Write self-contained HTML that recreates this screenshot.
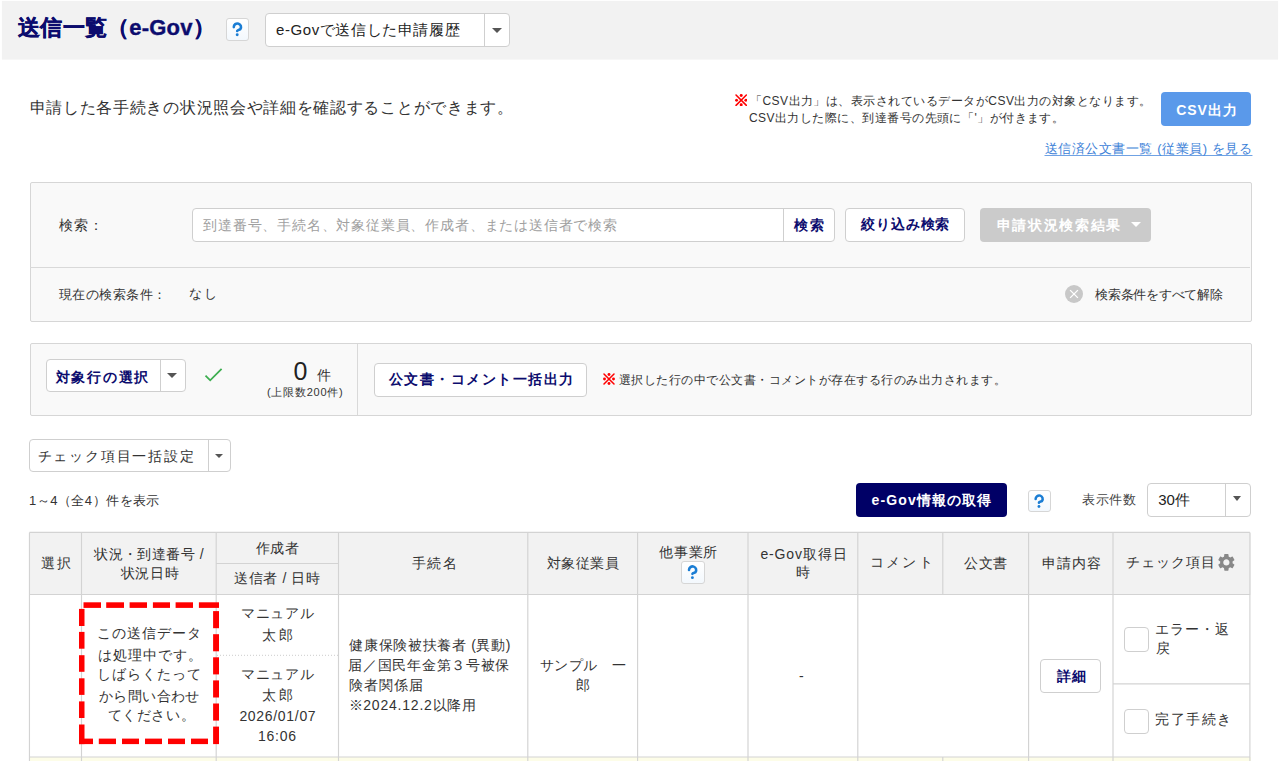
<!DOCTYPE html>
<html lang="ja">
<head>
<meta charset="utf-8">
<style>
*{box-sizing:border-box;margin:0;padding:0}
html,body{width:1280px;height:761px;overflow:hidden;background:#fff}
body{font-family:"Liberation Sans",sans-serif;color:#333;position:relative}
.t{position:absolute;white-space:nowrap;line-height:20px}
.s{position:absolute}
.q{border:1px solid #d6d6d6;border-radius:3px;background:linear-gradient(#fff,#f3f8fd)}
</style>
</head>
<body>
<svg class="s" style="left:0;top:0" width="1280" height="62"><rect x="1.9" y="0.9" width="1276.2" height="58.7" fill="#f2f2f2"/></svg>
<div class="t" style="left:18.2px;top:17.5px;font-size:22px;letter-spacing:0.21px;color:#0c0c6e;font-weight:bold;-webkit-text-stroke:0.4px #0c0c6e;">送信一覧（e-Gov）</div>
<div class="s q" style="left:226px;top:18.2px;width:23px;height:23px"></div>
<svg class="s" style="left:226px;top:18.2px" width="23" height="23" viewBox="0 0 23 23"><path d="M7.8 9.1A3.6 3.6 0 1 1 14.3 11.2Q11.2 12.2 11.2 12.9" fill="none" stroke="#1a7dd4" stroke-width="2.6" stroke-linecap="round"/><circle cx="11.2" cy="16.75" r="1.45" fill="#1a7dd4"/></svg>
<div class="s" style="left:265px;top:13px;width:245px;height:34px;background:#fff;border:1px solid #cfcfcf;border-radius:4px"></div>
<div class="s" style="left:484px;top:14px;width:1px;height:32px;background:#cfcfcf"></div>
<div class="s" style="left:492px;top:27.8px;width:0;height:0;border-left:5.0px solid transparent;border-right:5.0px solid transparent;border-top:5px solid #555"></div>
<div class="t" style="left:276.0px;top:20.2px;font-size:15px;letter-spacing:0.596px;color:#222;">e-Govで送信した申請履歴</div>
<div class="t" style="left:29.6px;top:97.9px;font-size:16px;letter-spacing:0.693px;color:#333;">申請した各手続きの状況照会や詳細を確認することができます。</div>
<svg class="s" style="left:734.7px;top:93.9px" width="12.4" height="12.4" viewBox="0 0 12 12"><path d="M1 1L11 11M11 1L1 11" stroke="#f00" stroke-width="1.5" stroke-linecap="round"/><circle cx="6" cy="1.5" r="1.45" fill="#f00"/><circle cx="6" cy="10.5" r="1.45" fill="#f00"/><circle cx="1.5" cy="6" r="1.45" fill="#f00"/><circle cx="10.5" cy="6" r="1.45" fill="#f00"/></svg>
<div class="t" style="left:749.9px;top:90.7px;font-size:12px;letter-spacing:0.488px;color:#333;">「CSV出力」は、表示されているデータがCSV出力の対象となります。</div>
<div class="t" style="left:748.9px;top:107.6px;font-size:12px;letter-spacing:0.465px;color:#333;">CSV出力した際に、到達番号の先頭に「'」が付きます。</div>
<div class="s" style="left:1161px;top:92px;width:90px;height:34px;background:#5a99ea;border-radius:4px"></div>
<div class="t" style="left:1176.3px;top:99.75px;font-size:14px;letter-spacing:0.9px;color:#fff;font-weight:bold;">CSV出力</div>
<div class="t" style="left:1044.5px;top:139.3px;font-size:13px;letter-spacing:0.559px;color:#3d82d8;text-decoration:underline;text-underline-offset:2px;text-decoration-color:#6fa2e4;">送信済公文書一覧 (従業員) を見る</div>
<div class="s" style="left:29.5px;top:182px;width:1222px;height:140px;background:#f9f9f9;border:1px solid #d6d6d6;border-radius:2px"></div>
<div class="s" style="left:30px;top:267px;width:1220px;height:1px;background:#d9d9d9"></div>
<div class="t" style="left:58.7px;top:215.0px;font-size:14px;letter-spacing:1.25px;color:#333;">検索：</div>
<div class="s" style="left:192px;top:208px;width:643px;height:34px;background:#fff;border:1px solid #cfcfcf;border-radius:4px"></div>
<div class="s" style="left:783px;top:209px;width:1px;height:32px;background:#cfcfcf"></div>
<div class="t" style="left:203.2px;top:214.85px;font-size:14px;letter-spacing:0.807px;color:#a0a0a0;">到達番号、手続名、対象従業員、作成者、または送信者で検索</div>
<div class="t" style="left:793.8px;top:214.6px;font-size:14px;letter-spacing:2.1px;color:#0c0c6e;font-weight:bold;">検索</div>
<div class="s" style="left:845px;top:208px;width:120px;height:34px;background:#fff;border:1px solid #cfcfcf;border-radius:4px"></div>
<div class="t" style="left:860.7px;top:214.1px;font-size:14px;letter-spacing:0.96px;color:#0c0c6e;font-weight:bold;">絞り込み検索</div>
<div class="s" style="left:980px;top:208px;width:171px;height:34px;background:#cbcbcb;border-radius:4px"></div>
<div class="t" style="left:996.5px;top:214.7px;font-size:14px;letter-spacing:1.7px;color:#fff;font-weight:bold;">申請状況検索結果</div>
<div class="s" style="left:1130.8px;top:222.1px;width:0;height:0;border-left:5.0px solid transparent;border-right:5.0px solid transparent;border-top:5px solid #fff"></div>
<div class="t" style="left:58.7px;top:284.6px;font-size:13px;letter-spacing:0.543px;color:#333;">現在の検索条件：</div>
<div class="t" style="left:188.5px;top:283.6px;font-size:13px;letter-spacing:2.5px;color:#333;">なし</div>
<div class="s" style="left:1065px;top:285px;width:18px;height:18px;background:#c8c8c8;border-radius:50%"></div>
<svg class="s" style="left:1065px;top:285px" width="18" height="18"><path d="M5.1 5.1L12.9 12.9M12.9 5.1L5.1 12.9" stroke="#fff" stroke-width="1.3"/></svg>
<div class="t" style="left:1095.0px;top:285.1px;font-size:13px;letter-spacing:-0.244px;color:#333;">検索条件をすべて解除</div>
<div class="s" style="left:29.5px;top:343px;width:1222px;height:73px;background:#f9f9f9;border:1px solid #d6d6d6;border-radius:2px"></div>
<div class="s" style="left:357px;top:344px;width:1px;height:71px;background:#d9d9d9"></div>
<div class="s" style="left:46px;top:359px;width:140px;height:33px;background:#fff;border:1px solid #cfcfcf;border-radius:4px"></div>
<div class="s" style="left:160px;top:360px;width:1px;height:31px;background:#cfcfcf"></div>
<div class="s" style="left:166.5px;top:373px;width:0;height:0;border-left:5.5px solid transparent;border-right:5.5px solid transparent;border-top:5.5px solid #555"></div>
<div class="t" style="left:55.6px;top:366.5px;font-size:14px;letter-spacing:1.78px;color:#0c0c6e;font-weight:bold;">対象行の選択</div>
<svg class="s" style="left:203px;top:366px" width="22" height="18"><path d="M2.5 9.6L7.2 14.3L18.6 2.9" fill="none" stroke="#3dae50" stroke-width="1.8"/></svg>
<div class="t" style="left:293.6px;top:361.25px;font-size:25px;letter-spacing:0.0px;color:#222;">0</div>
<div class="t" style="left:317.0px;top:364.5px;font-size:14px;letter-spacing:0.0px;color:#333;">件</div>
<div class="t" style="left:267.0px;top:381.6px;font-size:11px;letter-spacing:0.75px;color:#333;">(上限数200件)</div>
<div class="s" style="left:374px;top:363px;width:213px;height:34px;background:#fff;border:1px solid #cfcfcf;border-radius:4px"></div>
<div class="t" style="left:389.0px;top:369.35px;font-size:14px;letter-spacing:1.455px;color:#0c0c6e;font-weight:bold;">公文書・コメント一括出力</div>
<svg class="s" style="left:603px;top:372.6px" width="12" height="12" viewBox="0 0 12 12"><path d="M1 1L11 11M11 1L1 11" stroke="#f00" stroke-width="1.5" stroke-linecap="round"/><circle cx="6" cy="1.5" r="1.45" fill="#f00"/><circle cx="6" cy="10.5" r="1.45" fill="#f00"/><circle cx="1.5" cy="6" r="1.45" fill="#f00"/><circle cx="10.5" cy="6" r="1.45" fill="#f00"/></svg>
<div class="t" style="left:619.0px;top:369.5px;font-size:12px;letter-spacing:0.487px;color:#333;">選択した行の中で公文書・コメントが存在する行のみ出力されます。</div>
<div class="s" style="left:29px;top:439px;width:202px;height:33px;background:#fff;border:1px solid #cfcfcf;border-radius:4px"></div>
<div class="s" style="left:208px;top:440px;width:1px;height:31px;background:#cfcfcf"></div>
<div class="s" style="left:214.5px;top:453.5px;width:0;height:0;border-left:4.5px solid transparent;border-right:4.5px solid transparent;border-top:4.6px solid #555"></div>
<div class="t" style="left:37.6px;top:446.4px;font-size:14px;letter-spacing:1.8px;color:#333;">チェック項目一括設定</div>
<div class="t" style="left:29.0px;top:490.8px;font-size:13px;letter-spacing:0.48px;color:#333;">1～4（全4）件を表示</div>
<div class="s" style="left:856px;top:483px;width:151px;height:34px;background:#000066;border-radius:4px"></div>
<div class="t" style="left:871.5px;top:489.5px;font-size:14px;letter-spacing:1.133px;color:#fff;font-weight:bold;">e-Gov情報の取得</div>
<div class="s q" style="left:1028px;top:489.5px;width:22.5px;height:22.75px"></div>
<svg class="s" style="left:1028px;top:489.5px" width="22.5" height="22.75" viewBox="0 0 23 23"><path d="M7.8 9.1A3.6 3.6 0 1 1 14.3 11.2Q11.2 12.2 11.2 12.9" fill="none" stroke="#1a7dd4" stroke-width="2.6" stroke-linecap="round"/><circle cx="11.2" cy="16.75" r="1.45" fill="#1a7dd4"/></svg>
<div class="t" style="left:1082.4px;top:489.8px;font-size:13px;letter-spacing:0.533px;color:#444;">表示件数</div>
<div class="s" style="left:1147px;top:483px;width:104px;height:34px;background:#fff;border:1px solid #cfcfcf;border-radius:4px"></div>
<div class="s" style="left:1225px;top:484px;width:1px;height:32px;background:#cfcfcf"></div>
<div class="s" style="left:1233px;top:496px;width:0;height:0;border-left:4.75px solid transparent;border-right:4.75px solid transparent;border-top:5.3px solid #555"></div>
<div class="t" style="left:1158.3px;top:489.5px;font-size:15px;letter-spacing:-0.1px;color:#222;">30件</div>
<div class="s" style="left:29px;top:532px;width:1222px;height:63px;background:#f2f2f2;border-radius:2px 2px 0 0"></div>
<div class="s" style="left:29px;top:757px;width:1222px;height:4px;background:#fdfde8"></div>
<svg class="s" style="left:0;top:0" width="1280" height="761"><path d="M29.45 532.4V761M81.5 532.4V761M216.2 532.4V761M338.5 532.4V761M527.8 532.4V761M637.6 532.4V761M748 532.4V761M857.8 532.4V761M1028.6 532.4V761M1113 532.4V761M1249.9 532.4V761M942.8 532.4V594.5M942.8 757V761M29.45 532.4H1249.9M216.2 563.5H338.5M29.45 594.5H1249.9M29.45 757H1249.9M1113 683.8H1249.9" stroke="#d3d3d3" stroke-width="1.15" fill="none"/><path d="M217 655.3H338" stroke="#cccccc" stroke-width="1" stroke-dasharray="1 2" fill="none"/></svg>
<div class="t" style="left:41.1px;top:552.65px;font-size:14px;letter-spacing:1.7px;color:#333;">選択</div>
<div class="t" style="left:94.1px;top:543.7px;font-size:14px;letter-spacing:0.463px;color:#333;">状況・到達番号 /</div>
<div class="t" style="left:120.5px;top:562.55px;font-size:14px;letter-spacing:0.7px;color:#333;">状況日時</div>
<div class="t" style="left:255.7px;top:537.55px;font-size:14px;letter-spacing:0.75px;color:#333;">作成者</div>
<div class="t" style="left:234.4px;top:568.05px;font-size:14px;letter-spacing:0.543px;color:#333;">送信者 / 日時</div>
<div class="t" style="left:411.8px;top:553.4px;font-size:14px;letter-spacing:1.6px;color:#333;">手続名</div>
<div class="t" style="left:546.8px;top:553.4px;font-size:14px;letter-spacing:0.55px;color:#333;">対象従業員</div>
<div class="t" style="left:659.3px;top:542.15px;font-size:14px;letter-spacing:0.7px;color:#333;">他事業所</div>
<div class="t" style="left:760.4px;top:543.55px;font-size:14px;letter-spacing:0.857px;color:#333;">e-Gov取得日</div>
<div class="t" style="left:795.5px;top:562.1px;font-size:14px;letter-spacing:0.0px;color:#333;">時</div>
<div class="t" style="left:869.5px;top:551.7px;font-size:14px;letter-spacing:2.367px;color:#333;">コメント</div>
<div class="t" style="left:964.3px;top:552.7px;font-size:14px;letter-spacing:0.6px;color:#333;">公文書</div>
<div class="t" style="left:1041.5px;top:552.7px;font-size:14px;letter-spacing:1.267px;color:#333;">申請内容</div>
<div class="t" style="left:1126.3px;top:551.9px;font-size:14px;letter-spacing:1.02px;color:#333;">チェック項目</div>
<div class="s q" style="left:681.3px;top:560.7px;width:23.4px;height:22.9px"></div>
<svg class="s" style="left:681.3px;top:560.7px" width="23.4" height="22.9" viewBox="0 0 23 23"><path d="M7.8 9.1A3.6 3.6 0 1 1 14.3 11.2Q11.2 12.2 11.2 12.9" fill="none" stroke="#1a7dd4" stroke-width="2.6" stroke-linecap="round"/><circle cx="11.2" cy="16.75" r="1.45" fill="#1a7dd4"/></svg>
<svg class="s" style="left:1216.1px;top:552.4px" width="20.75" height="20.75" viewBox="0 0 24 24"><path fill="#888" d="M19.14 12.94c.04-.3.06-.61.06-.94 0-.32-.02-.64-.07-.94l2.03-1.58a.49.49 0 0 0 .12-.61l-1.92-3.32a.488.488 0 0 0-.59-.22l-2.39.96c-.5-.38-1.03-.7-1.62-.94l-.36-2.54a.484.484 0 0 0-.48-.41h-3.840c-.24 0-.43.17-.47.41l-.36 2.54c-.59.24-1.130.57-1.62.94l-2.39-.96c-.22-.08-.47 0-.59.22L2.74 8.87c-.12.21-.08.47.12.61l2.03 1.58c-.05.3-.09.63-.09.94s.02.64.07.94l-2.03 1.58a.49.49 0 0 0-.12.61l1.92 3.32c.12.22.37.29.59.22l2.39-.96c.5.38 1.03.7 1.62.94l.36 2.54c.05.24.24.41.48.41h3.84c.24 0 .44-.17.47-.41l.36-2.54c.59-.24 1.13-.56 1.62-.94l2.39.96c.22.08.47 0 .59-.22l1.92-3.32c.12-.22.07-.47-.12-.61l-2.010-1.58zM12 15.6c-1.98 0-3.6-1.62-3.6-3.6s1.62-3.6 3.6-3.6 3.6 1.62 3.6 3.6-1.62 3.6-3.6 3.6z"/></svg>
<svg class="s" style="left:0;top:0" width="1280" height="761"><g fill="#ff0000"><rect x="83.50" y="602.30" width="17.50" height="5.60"/><rect x="106.20" y="602.30" width="17.80" height="5.60"/><rect x="129.60" y="602.30" width="17.40" height="5.60"/><rect x="152.90" y="602.30" width="17.10" height="5.60"/><rect x="175.60" y="602.30" width="17.40" height="5.60"/><rect x="198.90" y="602.30" width="20.10" height="5.60"/><rect x="213.10" y="611.10" width="5.90" height="17.10"/><rect x="213.10" y="634.20" width="5.90" height="17.10"/><rect x="213.10" y="657.30" width="5.90" height="17.10"/><rect x="213.10" y="680.40" width="5.90" height="17.10"/><rect x="213.10" y="703.50" width="5.90" height="17.10"/><rect x="213.10" y="726.60" width="5.90" height="17.50"/><rect x="79.00" y="738.60" width="14.00" height="5.50"/><rect x="98.80" y="738.60" width="17.20" height="5.50"/><rect x="122.00" y="738.60" width="17.00" height="5.50"/><rect x="145.00" y="738.60" width="17.00" height="5.50"/><rect x="168.00" y="738.60" width="17.00" height="5.50"/><rect x="191.00" y="738.60" width="17.00" height="5.50"/><rect x="79.00" y="608.90" width="5.50" height="17.10"/><rect x="79.00" y="631.90" width="5.50" height="16.80"/><rect x="79.00" y="655.20" width="5.50" height="16.60"/><rect x="79.00" y="678.30" width="5.50" height="16.60"/><rect x="79.00" y="701.40" width="5.50" height="16.60"/><rect x="79.00" y="724.50" width="5.50" height="19.60"/></g></svg>
<div class="t" style="left:97.4px;top:623.2px;font-size:14px;letter-spacing:1.0px;color:#333;">この送信データ</div>
<div class="t" style="left:98.4px;top:644.7px;font-size:14px;letter-spacing:0.867px;color:#333;">は処理中です。</div>
<div class="t" style="left:96.8px;top:663.7px;font-size:14px;letter-spacing:1.1px;color:#333;">しばらくたって</div>
<div class="t" style="left:98.8px;top:685.7px;font-size:14px;letter-spacing:0.433px;color:#333;">から問い合わせ</div>
<div class="t" style="left:107.6px;top:705.2px;font-size:14px;letter-spacing:0.62px;color:#333;">てください。</div>
<div class="t" style="left:241.3px;top:603.2px;font-size:14px;letter-spacing:0.6px;color:#333;">マニュアル</div>
<div class="t" style="left:261.9px;top:625.2px;font-size:14px;letter-spacing:3.3px;color:#333;">太郎</div>
<div class="t" style="left:241.3px;top:664.2px;font-size:14px;letter-spacing:0.6px;color:#333;">マニュアル</div>
<div class="t" style="left:261.9px;top:685.2px;font-size:14px;letter-spacing:3.3px;color:#333;">太郎</div>
<div class="t" style="left:239.4px;top:706.2px;font-size:14px;letter-spacing:0.689px;color:#333;">2026/01/07</div>
<div class="t" style="left:257.9px;top:726.3px;font-size:14px;letter-spacing:0.8px;color:#333;">16:06</div>
<div class="t" style="left:349.4px;top:634.8px;font-size:14px;letter-spacing:0.65px;color:#333;">健康保険被扶養者 (異動)</div>
<div class="t" style="left:348.4px;top:654.5px;font-size:14px;letter-spacing:0.69px;color:#333;">届／国民年金第３号被保</div>
<div class="t" style="left:349.4px;top:675.0px;font-size:14px;letter-spacing:0.875px;color:#333;">険者関係届</div>
<div class="t" style="left:348.5px;top:695.2px;font-size:14px;letter-spacing:0.792px;color:#333;">※2024.12.2以降用</div>
<div class="t" style="left:539.7px;top:654.8px;font-size:14px;letter-spacing:0.54px;color:#333;">サンプル　一</div>
<div class="t" style="left:576.0px;top:674.8px;font-size:14px;letter-spacing:0.0px;color:#333;">郎</div>
<div class="t" style="left:799px;top:666px;font-size:14px;color:#333">-</div>
<div class="s" style="left:1040px;top:659px;width:61px;height:34px;background:#fff;border:1px solid #cfcfcf;border-radius:4px"></div>
<div class="t" style="left:1056.6px;top:665.6px;font-size:14px;letter-spacing:1.4px;color:#0c0c6e;font-weight:bold;">詳細</div>
<div class="s" style="left:1124px;top:626.5px;width:25px;height:25px;background:#fff;border:1px solid #cfcfcf;border-radius:4px"></div>
<div class="s" style="left:1124px;top:708.5px;width:25px;height:25px;background:#fff;border:1px solid #cfcfcf;border-radius:4px"></div>
<div class="t" style="left:1154.6px;top:618.7px;font-size:14px;letter-spacing:1.175px;color:#333;">エラー・返</div>
<div class="t" style="left:1155.6px;top:638.4px;font-size:14px;letter-spacing:0.0px;color:#333;">戻</div>
<div class="t" style="left:1155.0px;top:709.2px;font-size:14px;letter-spacing:1.5px;color:#333;">完了手続き</div>
</body>
</html>
